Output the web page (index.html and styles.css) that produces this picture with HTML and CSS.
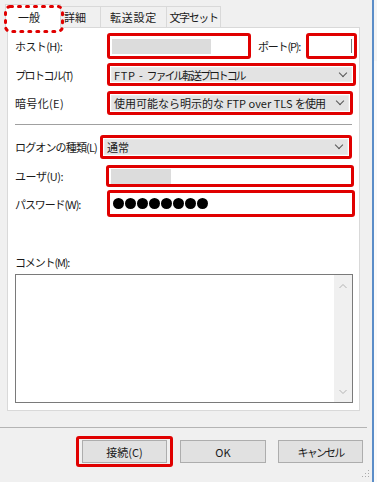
FILE: index.html
```html
<!DOCTYPE html>
<html lang="ja">
<head>
    <meta charset="UTF-8">
    <meta name="viewport" content="width=device-width, initial-scale=1.0">
    <title>サイトの設定</title>
    <link rel="stylesheet" href="styles.css">
</head>
<body>
    <div class="screen">
        <div class="dialog">
            <div class="tabs">
                <div class="tab active">一般
                    <svg class="mark" width="60" height="28" viewBox="0 0 60 28">
                        <rect x="1.5" y="1.5" width="57" height="25" rx="5" fill="none" stroke="#e00000" stroke-width="3" stroke-dasharray="2 6" stroke-linecap="round"/>
                    </svg>
                </div>
                <div class="tab t2">詳細</div>
                <div class="tab t3">転送設定</div>
                <div class="tab t4">文字セット</div>
            </div>

            <div class="panel">
                <div class="row r-host">
                    <span class="label host-label">ホスト(H):</span>
                    <div class="red host">
                        <div class="field"><span class="blur host-blur"></span></div>
                    </div>
                    <span class="label port-label">ポート(P):</span>
                    <div class="red port">
                        <div class="field port-field"></div>
                    </div>
                </div>
                <div class="row r-proto">
                    <span class="label proto-label">プロトコル(T)</span>
                    <div class="red proto">
                        <div class="select"><span class="latin">FTP - </span><span class="kana">ファイル転送プロトコル</span><span class="chev"></span></div>
                    </div>
                </div>
                <div class="row r-enc">
                    <span class="label enc-label">暗号化(E)</span>
                    <div class="red enc">
                        <div class="select">使用可能なら明示的な FTP over TLS <span class="tail">を使用</span><span class="chev"></span></div>
                    </div>
                </div>

                <div class="sep"></div>

                <div class="row r-logon">
                    <span class="label logon-label">ログオンの種類(L)</span>
                    <div class="red logon">
                        <div class="select">通常<span class="chev"></span></div>
                    </div>
                </div>
                <div class="row r-user">
                    <span class="label user-label">ユーザ(U):</span>
                    <div class="red user">
                        <div class="field"><span class="blur user-blur"></span></div>
                    </div>
                </div>
                <div class="row r-pass">
                    <span class="label pass-label">パスワード(W):</span>
                    <div class="red pass">
                        <div class="field dots">
                            <i></i><i></i><i></i><i></i><i></i><i></i><i></i><i></i>
                        </div>
                    </div>
                </div>

                <div class="comment-label">コメント(M):</div>
                <div class="textarea">
                    <div class="scroll">
                        <svg width="18" height="10" viewBox="0 0 18 10"><path d="M5.5 7 L9 3.5 L12.5 7" fill="none" stroke="#b4b4b4" stroke-width="1"/></svg>
                        <svg width="18" height="10" viewBox="0 0 18 10"><path d="M5.5 3 L9 6.5 L12.5 3" fill="none" stroke="#b4b4b4" stroke-width="1"/></svg>
                    </div>
                </div>
            </div>

            <div class="footer">
                <div class="red connect">
                    <button class="btn">接続(C)</button>
                </div>
                <button class="btn ok">OK</button>
                <button class="btn cancel">キャンセル</button>
            </div>
            <svg class="grip" width="8" height="8" viewBox="0 0 8 8">
                <rect x="6" y="0" width="1" height="1" fill="#aaa"/>
                <rect x="3" y="3" width="1" height="1" fill="#aaa"/>
                <rect x="6" y="3" width="1" height="1" fill="#aaa"/>
                <rect x="0" y="6" width="1" height="1" fill="#aaa"/>
                <rect x="3" y="6" width="1" height="1" fill="#aaa"/>
                <rect x="6" y="6" width="1" height="1" fill="#aaa"/>
            </svg>
        </div>
        <div class="edge"></div>
        <div class="behind"></div>
    </div>
</body>
</html>
```

FILE: styles.css
```css
*{
    margin: 0;
    padding: 0;
    box-sizing: border-box;
}
body{
    width: 377px;
    height: 482px;
    overflow: hidden;
    font-family: "Noto Sans CJK JP", "Liberation Sans", sans-serif;
    font-size: 11px;
    line-height: 16px;
    color: #1a1a1a;
}
.screen{
    display: flex;
    height: 482px;
}
.dialog{
    position: relative;
    width: 372px;
    height: 482px;
    background-color: #f0f0f0;
}
.edge{
    width: 2px;
    background-color: #5b8dc8;
}
.behind{
    flex: 1;
    background-color: #fafafa;
    border-top: 61px solid #f4f4f4;
}

/* tabs */
.tabs{
    display: flex;
    align-items: flex-end;
    height: 27px;
    padding-left: 5px;
}
.tab{
    height: 21px;
    padding-top: 2px;
    background-color: #f0f0f0;
    border: 1px solid #d9d9d9;
    border-bottom: none;
    border-left: none;
    text-align: center;
    white-space: nowrap;
}
.tab.active{
    position: relative;
    z-index: 1;
    width: 56px;
    height: 24px;
    margin-bottom: -1px;
    padding: 4px 0 0 12px;
    text-align: left;
    background-color: #fff;
    border-left: 1px solid #d9d9d9;
}
.mark{
    position: absolute;
    left: -2px;
    top: 0px;
}
.t2{ width: 40px; padding-left: 3px; text-align: left; }
.t3{ width: 66px; letter-spacing: 0.7px; }
.t4{ width: 54px; letter-spacing: -1.4px; }

/* panel */
.panel{
    margin-left: 7px;
    width: 353px;
    height: 384px;
    padding: 5px 0 0 7px;
    background-color: #fff;
    border: 1px solid #d9d9d9;
}
.row{
    display: flex;
    align-items: center;
}
.label{
    width: 92px;
    white-space: nowrap;
}
.host-label{ letter-spacing: -0.6px; }
.proto-label{ letter-spacing: -1.5px; }
.enc-label{ letter-spacing: 0.35px; }
.logon-label{ letter-spacing: -0.85px; }
.user-label{ letter-spacing: -0.45px; }
.pass-label{ letter-spacing: -1.1px; }
.red{
    border: 3px solid #e00000;
    border-radius: 3px;
    padding: 1px;
    display: flex;
}
.field{
    flex: 1;
    background-color: #fff;
    display: flex;
    align-items: center;
    padding-left: 1px;
}
.blur{
    display: block;
    height: 15px;
    background-color: #dcdcdc;
}
.host-blur{ width: 99px; }
.user-blur{ width: 60px; }
.select{
    position: relative;
    flex: 1;
    display: flex;
    align-items: center;
    padding-left: 2px;
    background-color: #e3e3e3;
    border: 1px solid #eaeaea;
    white-space: pre;
    overflow: hidden;
}
.latin{ letter-spacing: 0.7px; }
.kana{ letter-spacing: -2.1px; }
.tail{ letter-spacing: -1px; }
.chev{
    position: absolute;
    right: 5px;
    top: 50%;
    width: 6px;
    height: 6px;
    margin-top: -5px;
    border-right: 1px solid #555;
    border-bottom: 1px solid #555;
    transform: rotate(45deg);
}

.r-host{ height: 26px; }
.host{ width: 144px; height: 26px; }
.port-label{ width: 48px; margin-left: 7px; letter-spacing: -1.2px; }
.port{ width: 51px; height: 26px; }
.port-field{ border-right: 1px solid #7a7a7a; margin: 2px 1px; }

.r-proto{ margin-top: 4px; }
.proto{ width: 249px; height: 23px; }
.r-enc{ margin-top: 5px; }
.enc{ width: 246px; height: 24px; }

.sep{
    margin-top: 9px;
    width: 337px;
    height: 1px;
    background-color: #a0a0a0;
}

.r-logon{ margin-top: 10px; }
.logon-label{ width: 85px; }
.logon{ width: 252px; height: 24px; }
.r-user{ margin-top: 6px; }
.user-label{ width: 91px; }
.user{ width: 248px; height: 22px; }
.r-pass{ margin-top: 3px; }
.pass{ width: 248px; height: 27px; }
.dots{
    gap: 1px;
    padding-left: 2px;
}
.dots i{
    display: block;
    width: 11px;
    height: 11px;
    border-radius: 50%;
    background-color: #000;
}

.comment-label{
    margin-top: 37px;
    letter-spacing: -1.15px;
}
.textarea{
    margin-top: 4px;
    width: 338px;
    height: 129px;
    border: 1px solid #7a7a7a;
    display: flex;
    justify-content: flex-end;
}
.scroll{
    width: 18px;
    background-color: #f0f0f0;
    display: flex;
    flex-direction: column;
    justify-content: space-between;
    padding: 6px 0 5px 0;
}
.scroll svg{
    display: block;
}

/* buttons */
.footer{
    margin-top: 16px;
    border-top: 1px solid #b4b4b4;
    width: 367px;
    display: flex;
    align-items: center;
    padding: 8px 0 0 76px;
}
.btn{
    width: 85px;
    height: 23px;
    font-family: inherit;
    font-size: 11px;
    background-color: #e1e1e1;
    border: 1px solid #adadad;
    color: #1a1a1a;
}
.connect{
    padding: 1px 3px;
    border-radius: 3px;
}
.ok{
    width: 86px;
    margin-left: 7px;
}
.cancel{
    margin-left: 12px;
    letter-spacing: -1.8px;
}
.grip{
    position: absolute;
    right: 2px;
    bottom: 4px;
}
```
